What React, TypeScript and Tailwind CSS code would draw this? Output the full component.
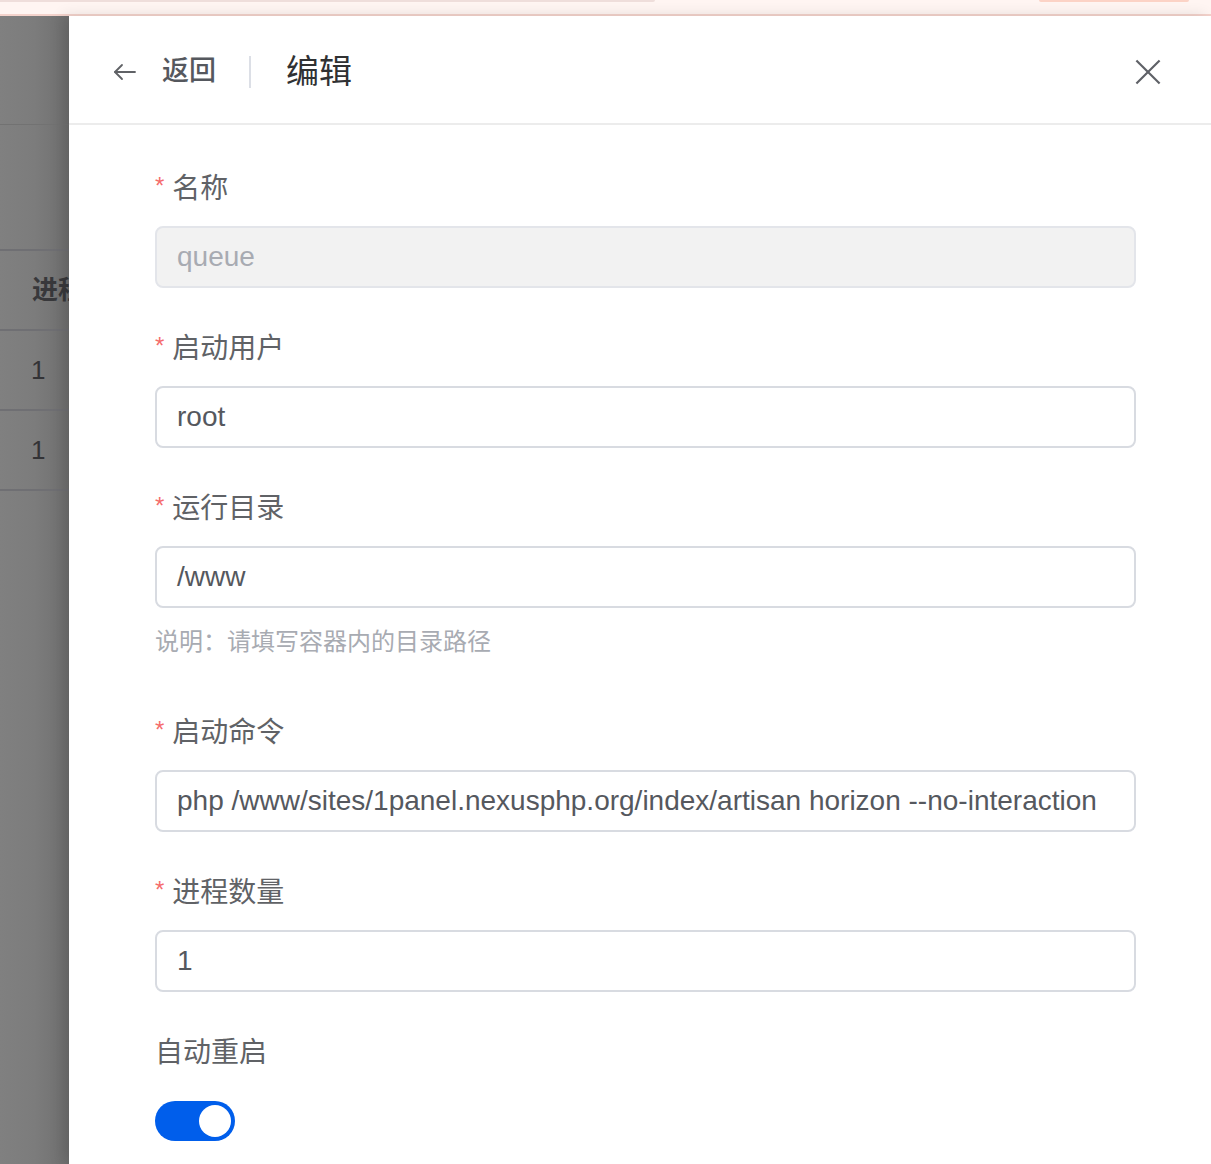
import React from "react";

const cjk = { fontFamily: '"Liberation Sans", "Noto Sans CJK SC", sans-serif' };

function Label({ text, required = true }: { text: string; required?: boolean }) {
  return (
    <div className="flex items-center h-[44px] pt-[4px] leading-[40px] text-[28px] text-[#606266]" style={cjk}>
      {required && <span className="text-[#f56c6c] text-[24px] mr-[8px] leading-none relative top-[-3px]">*</span>}
      <span>{text}</span>
    </div>
  );
}

function Input({ value, disabled = false }: { value: string; disabled?: boolean }) {
  return (
    <div
      className={
        "mt-[17px] h-[62px] rounded-[8px] border-2 flex items-center pl-[20px] text-[28px] whitespace-nowrap overflow-hidden " +
        (disabled ? "bg-[#f2f2f2] border-[#e3e5ea] text-[#a8abb2]" : "bg-white border-[#d8dbe1] text-[#55585e]")
      }
      style={cjk}
    >
      {value}
    </div>
  );
}

export default function App() {
  return (
    <div className="w-[1211px] h-[1164px] overflow-hidden flex flex-col bg-white" style={cjk}>
      {/* top banner */}
      <div className="h-[16px] shrink-0 bg-[#fff5f2] border-b-2 border-[#f4d3cc] flex justify-between items-start">
        <div className="w-[655px] h-[2px] bg-[#efdedb] rounded-br-full" />
        <div className="w-[150px] h-[2px] bg-[#fcd3c6] rounded-b-full mr-[22px]" />
      </div>
      <div className="flex flex-1 min-h-0">
        {/* dimmed background page */}
        <div className="w-[69px] shrink-0 bg-gradient-to-r from-[#808080] via-[#7c7c7c] to-[#6f6f6f] flex flex-col overflow-hidden">
          <div className="h-[109px] border-b border-[#727272]" />
          <div className="h-[126px] border-b-2 border-[#6f6f73]" />
          <div className="h-[80px] border-b-2 border-[#6f6f73] flex items-center pl-[32px] text-[26px] font-bold text-[#38383b] whitespace-nowrap">
            进程
          </div>
          <div className="h-[80px] border-b-2 border-[#6f6f73] flex items-center pl-[31px] text-[26px] text-[#333336]">
            1
          </div>
          <div className="h-[80px] border-b-2 border-[#6f6f73] flex items-center pl-[31px] text-[26px] text-[#333336]">
            1
          </div>
        </div>
        {/* drawer */}
        <div className="flex-1 flex flex-col bg-white shadow-[-6px_0_14px_rgba(0,0,0,0.12)]">
          <div className="h-[109px] pt-[4px] shrink-0 border-b-2 border-[#ececec] flex items-center pl-[44px] pr-[50px]">
            <svg width="24" height="24" viewBox="0 0 24 24" fill="none" stroke="#606266" strokeWidth="1.8" strokeLinecap="round" strokeLinejoin="round">
              <path d="M22 12H2" />
              <path d="M9 5l-7 7 7 7" />
            </svg>
            <span className="ml-[25px] text-[27px] font-medium text-[#55585e]">返回</span>
            <div className="ml-[33px] w-[2px] h-[32px] bg-[#dcdfe6]" />
            <span className="ml-[35px] text-[33px] text-[#303133]">编辑</span>
            <div className="flex-1" />
            <svg width="26" height="26" viewBox="0 0 24 24" fill="none" stroke="#5f6167" strokeWidth="2" strokeLinecap="square">
              <path d="M2 2L22 22" />
              <path d="M22 2L2 22" />
            </svg>
          </div>
          <div className="pl-[86px] pr-[75px] pt-[40px] flex flex-col">
            <div className="mb-[37px]">
              <Label text="名称" />
              <Input value="queue" disabled />
            </div>
            <div className="mb-[37px]">
              <Label text="启动用户" />
              <Input value="root" />
            </div>
            <div className="mb-[50px]">
              <Label text="运行目录" />
              <Input value="/www" />
              <div className="mt-[17px] h-[34px] leading-[34px] text-[24px] text-[#a8abb2]">说明：请填写容器内的目录路径</div>
            </div>
            <div className="mb-[37px]">
              <Label text="启动命令" />
              <Input value="php /www/sites/1panel.nexusphp.org/index/artisan horizon --no-interaction" />
            </div>
            <div className="mb-[37px]">
              <Label text="进程数量" />
              <Input value="1" />
            </div>
            <div>
              <Label text="自动重启" required={false} />
              <div className="mt-[16px] h-[64px] flex items-center">
                <div className="w-[80px] h-[40px] rounded-full bg-[#005eeb] flex items-center justify-end pr-[4px]">
                  <div className="w-[32px] h-[32px] rounded-full bg-white" />
                </div>
              </div>
            </div>
          </div>
        </div>
      </div>
    </div>
  );
}
